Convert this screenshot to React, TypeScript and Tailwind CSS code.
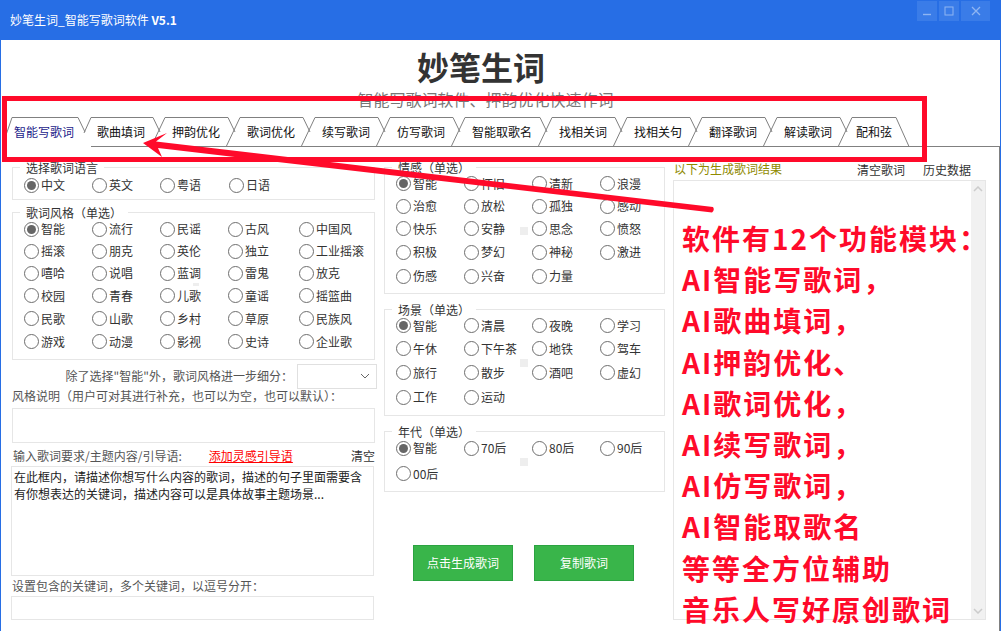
import React from "react";

const FONT = '"Noto Sans CJK SC", "Noto Sans", sans-serif';

const tabs = [
  { t: "智能写歌词", w: 79, pl: 2, tr: 66 },
  { t: "歌曲填词", w: 74, pl: 6, tr: 62 },
  { t: "押韵优化", w: 75, pl: 7, tr: 63 },
  { t: "歌词优化", w: 75, pl: 7, tr: 63 },
  { t: "续写歌词", w: 75, pl: 7, tr: 63 },
  { t: "仿写歌词", w: 75, pl: 7, tr: 63 },
  { t: "智能取歌名", w: 87, pl: 7, tr: 75 },
  { t: "找相关词", w: 75, pl: 7, tr: 63 },
  { t: "找相关句", w: 75, pl: 7, tr: 63 },
  { t: "翻译歌词", w: 75, pl: 7, tr: 63 },
  { t: "解读歌词", w: 75, pl: 7, tr: 63 },
  { t: "配和弦", w: 57, pl: 4, tr: 44 },
];

function Tab({ i }: { i: number }) {
  const tab = tabs[i];
  const first = i === 0;
  const second = i === 1;
  const last = i === tabs.length - 1;
  const w = tab.w;
  const leftPath = second
    ? "M-7 16 L0 0.5"
    : first
      ? "M-7 21 L0 0.5"
      : "M-14 30 L0 0.5";
  const rightPath = last
    ? `L${tab.tr} 0.5 L${tab.tr + 13} 29.5`
    : `L${tab.tr} 0.5 L${tab.tr + 7} 15`;
  return (
    <div className="relative h-full shrink-0" style={{ width: w }}>
      <svg className="absolute left-0 top-0 overflow-visible" width={w} height={30} fill="none">
        <path d={`${leftPath} ${rightPath}`} stroke="#808080" strokeWidth="1" />
        {!first && (
          <path
            d={second ? `M0 29.5 H${w - 14}` : last ? `M-14 29.5 H${tab.tr + 13}` : `M-14 29.5 H${w - 14}`}
            stroke="#808080"
            strokeWidth="1"
          />
        )}
      </svg>
      <span
        className={`relative block text-[12px] leading-[30px] whitespace-nowrap ${first ? "text-[#1c1c8a]" : "text-[#111]"}`}
        style={{ paddingLeft: tab.pl }}
      >
        {tab.t}
      </span>
    </div>
  );
}

function Radio({ label, checked }: { label: string; checked?: boolean }) {
  return (
    <div className="flex items-center gap-[2px] whitespace-nowrap text-[12px] text-[#333]">
      <span className="flex h-[15px] w-[15px] shrink-0 items-center justify-center rounded-full border border-[#6e6e6e] bg-white">
        {checked && <span className="h-[9px] w-[9px] rounded-full bg-[#666]" />}
      </span>
      <span>{label}</span>
    </div>
  );
}

function Group({
  title,
  className,
  children,
}: {
  title: string;
  className: string;
  children: React.ReactNode;
}) {
  return (
    <div className={`relative border border-[#e6e6e6] ${className}`}>
      <span className="absolute left-[7px] top-[-9px] bg-white px-[6px] text-[12px] leading-[17px] text-[#333]">
        {title}
      </span>
      {children}
    </div>
  );
}

const styles = [
  "智能", "流行", "民谣", "古风", "中国风",
  "摇滚", "朋克", "英伦", "独立", "工业摇滚",
  "嘻哈", "说唱", "蓝调", "雷鬼", "放克",
  "校园", "青春", "儿歌", "童谣", "摇篮曲",
  "民歌", "山歌", "乡村", "草原", "民族风",
  "游戏", "动漫", "影视", "史诗", "企业歌",
];
const moods = ["智能", "怀旧", "清新", "浪漫", "治愈", "放松", "孤独", "感动", "快乐", "安静", "思念", "愤怒", "积极", "梦幻", "神秘", "激进", "伤感", "兴奋", "力量"];
const scenes = ["智能", "清晨", "夜晚", "学习", "午休", "下午茶", "地铁", "驾车", "旅行", "散步", "酒吧", "虚幻", "工作", "运动"];
const eras = ["智能", "70后", "80后", "90后", "00后"];
const red = ["软件有12个功能模块：", "AI智能写歌词，", "AI歌曲填词，", "AI押韵优化、", "AI歌词优化，", "AI续写歌词，", "AI仿写歌词，", "AI智能取歌名", "等等全方位辅助", "音乐人写好原创歌词"];

export default function App() {
  return (
    <div
      className="relative h-[631px] w-[1001px] overflow-hidden border-x border-[#276ee5] bg-white"
      style={{ fontFamily: FONT }}
    >
      {/* title bar */}
      <div className="flex h-[40px] items-start justify-between bg-[#276ee5] pl-[9px] pr-[10px] text-white">
        <div className="text-[12px] leading-[40px]">
          妙笔生词_智能写歌词软件 <span className="font-bold">V5.1</span>
        </div>
        <div className="mt-px flex gap-[2px]">
          <div className="flex h-[20px] w-[20px] items-center justify-center bg-[#3a7ce8]">
            <svg width="10" height="10" fill="none"><path d="M1 8.5H9" stroke="#8fb5f2" strokeWidth="1.4" /></svg>
          </div>
          <div className="flex h-[20px] w-[20px] items-center justify-center bg-[#3a7ce8]">
            <svg width="10" height="10" fill="none"><rect x="1" y="1" width="8" height="8" stroke="#8fb5f2" /></svg>
          </div>
          <div className="flex h-[20px] w-[29px] items-center justify-center bg-[#3a7ce8]">
            <svg width="10" height="10" fill="none"><path d="M1 1L9 9M9 1L1 9" stroke="#8fb5f2" strokeWidth="1.3" /></svg>
          </div>
        </div>
      </div>

      {/* heading */}
      <div className="h-[77px] pl-[1px] text-center">
        <h1 className="mr-[40px] pt-[6px] text-[32px] font-bold leading-[40px] text-[#333]">妙笔生词</h1>
        <p className="ml-[-31px] mt-[2px] text-[16px] leading-[22px] text-[#777]">智能写歌词软件、押韵优化快速作词</p>
      </div>

      {/* tabs */}
      <div className="flex h-[30px] pl-[11px]">
        {tabs.map((_, i) => (
          <Tab key={i} i={i} />
        ))}
        <div className="h-full flex-1 border-b border-[#808080]" />
      </div>

      {/* panel */}
      <div className="flex h-[484px] gap-[9px] pl-[11px]">
        <div className="w-[363px] shrink-0">
          <Group title="选择歌词语言" className="mt-[20px] h-[33px] w-[363px]">
            <div className="grid grid-cols-[68px_68px_69px_60px] pl-[11px] pt-[8px]">
              <Radio label="中文" checked />
              <Radio label="英文" />
              <Radio label="粤语" />
              <Radio label="日语" />
            </div>
          </Group>
          <Group title="歌词风格（单选）" className="mt-[12px] h-[148px] w-[363px]">
            <div className="grid grid-cols-[68px_68px_68px_71px_60px] grid-rows-[22px_22px_22px_23px_23px_23px] pl-[11px] pt-[5px]">
              {styles.map((s, i) => (
                <Radio key={s} label={s} checked={i === 0} />
              ))}
            </div>
            <span className="absolute left-[180px] top-[70px] h-[3px] w-[6px] bg-[#eee]" />
          </Group>
          <div className="mt-[3px] flex h-[26px] items-center justify-end text-[12px] text-[#555]">
            <span className="mr-[4px]">除了选择"智能"外，歌词风格进一步细分：</span>
            <div className="mr-[-2px] flex h-[25px] w-[80px] shrink-0 items-center justify-end border border-[#e0e0e0] pr-[6px]">
              <svg width="10" height="6" fill="none"><path d="M1 1L5 5L9 1" stroke="#666" /></svg>
            </div>
          </div>
          <div className="mt-[-2px] h-[17px] text-[12px] leading-[17px] text-[#555]">风格说明（用户可对其进行补充，也可以为空，也可以默认）：</div>
          <div className="mt-[4px] h-[35px] w-[363px] border border-[#e6e6e6]" />
          <div className="mt-[4px] flex h-[17px] whitespace-nowrap pl-[1px] text-[12px] leading-[17px] text-[#555]">
            <span className="w-[197px]">输入歌词要求/主题内容/引导语:</span>
            <span className="w-[143px] text-[#f00] underline">添加灵感引导语</span>
            <span className="text-[#333]">清空</span>
          </div>
          <div className="ml-[-1px] mt-[2px] h-[110px] w-[363px] border border-[#e6e6e6] px-[2px] pt-[1px] text-[12px] leading-[17px] text-[#222]">
            在此框内，请描述你想写什么内容的歌词，描述的句子里面需要含有你想表达的关键词，描述内容可以是具体故事主题场景...
          </div>
          <div className="mt-[1px] h-[17px] text-[12px] leading-[17px] text-[#555]">设置包含的关键词，多个关键词，以逗号分开：</div>
          <div className="ml-[-1px] mt-[2px] h-[24px] w-[363px] border border-[#e6e6e6]" />
        </div>

        <div className="w-[281px] shrink-0">
          <Group title="情感（单选）" className="mt-[20px] h-[127px] w-[281px]">
            <div className="grid grid-cols-[68px_68px_68px_68px] grid-rows-[23px_22px_23px_24px_24px] pl-[11px] pt-[4px]">
              {moods.map((s, i) => (
                <Radio key={s} label={s} checked={i === 0} />
              ))}
            </div>
            <span className="absolute left-[135px] top-[59px] h-[8px] w-[8px] bg-[#eee]" />
          </Group>
          <Group title="场景（单选）" className="mt-[15px] h-[107px] w-[281px]">
            <div className="grid grid-cols-[68px_68px_68px_68px] grid-rows-[23px_23px_25px_24px] pl-[11px] pt-[4px]">
              {scenes.map((s, i) => (
                <Radio key={s} label={s} checked={i === 0} />
              ))}
            </div>
            <span className="absolute left-[135px] top-[49px] h-[8px] w-[8px] bg-[#eee]" />
          </Group>
          <Group title="年代（单选）" className="mt-[15px] h-[61px] w-[281px]">
            <div className="grid grid-cols-[68px_68px_68px_68px] grid-rows-[24px_27px] pl-[11px] pt-[4px]">
              {eras.map((s, i) => (
                <Radio key={s} label={s} checked={i === 0} />
              ))}
            </div>
            <span className="absolute left-[135px] top-[26px] h-[8px] w-[8px] bg-[#eee]" />
          </Group>
          <div className="mt-[53px] flex gap-[21px] pl-[29px]">
            <div className="flex h-[36px] w-[100px] items-center justify-center border border-[#2ba341] bg-[#39b54a] text-[12px] text-white">点击生成歌词</div>
            <div className="flex h-[36px] w-[100px] items-center justify-center border border-[#2ba341] bg-[#39b54a] text-[12px] text-white">复制歌词</div>
          </div>
        </div>

        <div className="min-w-0 flex-1 border-r border-[#808080] pl-0">
          <div className="ml-[-1px] w-[313px]">
            <div className="flex h-[33px] items-end justify-between pb-[2px] text-[12px] leading-[17px]">
              <span className="mb-[1px] ml-[1px] text-[#8f8a00]">以下为生成歌词结果</span>
              <span className="mr-[15px] flex gap-[18px] text-[#333]">
                <span>清空歌词</span>
                <span>历史数据</span>
              </span>
            </div>
            <div className="flex h-[440px] justify-end border border-[#e6e6e6]">
              <div className="flex h-full w-[14px] flex-col items-center justify-between bg-[#f1f1f1] py-[5px]">
                <svg width="10" height="6" fill="none"><path d="M1 5L5 1L9 5" stroke="#ccc" strokeWidth="1.5" /></svg>
                <svg width="10" height="6" fill="none"><path d="M1 1L5 5L9 1" stroke="#ccc" strokeWidth="1.5" /></svg>
              </div>
            </div>
          </div>
        </div>
      </div>

      {/* annotations */}
      <div className="pointer-events-none absolute left-[1px] top-[96px] h-[66px] w-[925px] border-[5px] border-[#ff0a2a]" />
      <svg className="pointer-events-none absolute left-[-1px] top-0" width="1001" height="631" fill="none">
        <path d="M143 143 L167 133 L156 141.5 L713 207 Q715 210 712 212.5 L158 148 L162 157 Z" fill="#ff0a2a" />
      </svg>
      <div className="pointer-events-none absolute left-[681px] top-[218px] text-[28px] font-bold leading-[41.2px] tracking-[2px] whitespace-nowrap text-[#ff0a2a]">
        {red.map((r) => (
          <div key={r}>{r}</div>
        ))}
      </div>
    </div>
  );
}
